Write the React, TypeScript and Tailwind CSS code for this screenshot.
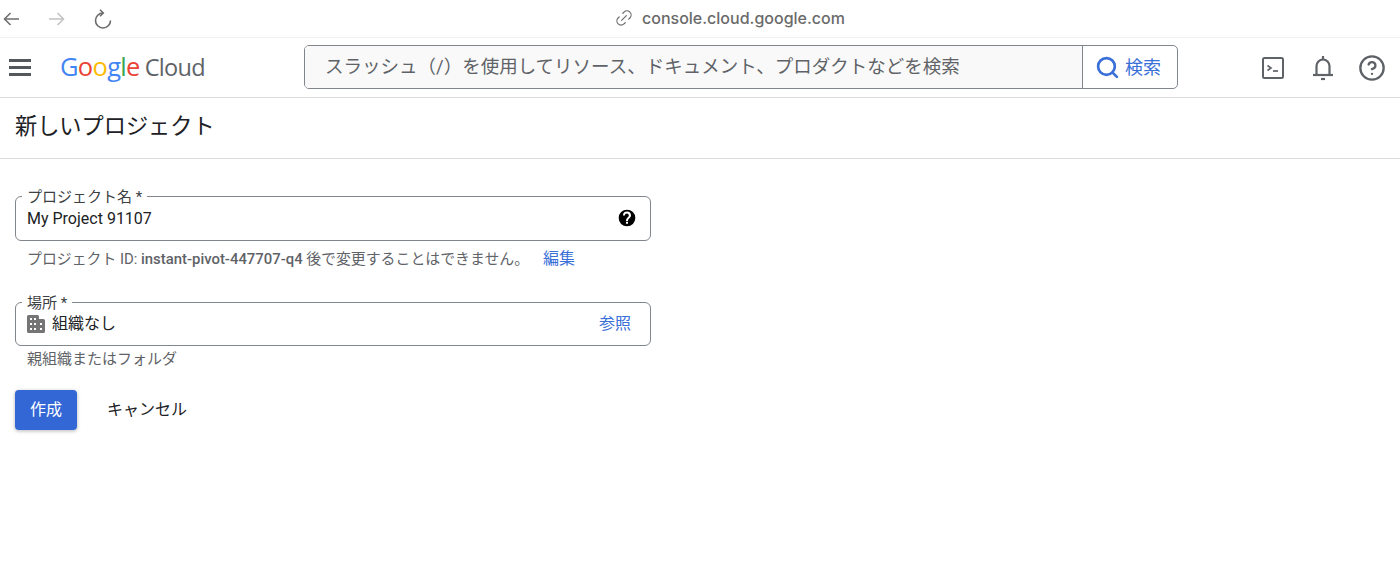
import { Link2, Search, CircleHelp } from 'lucide-react';

const font = "font-['Roboto','Noto_Sans_CJK_JP',sans-serif]";

function BackArrow({ className }: { className: string }) {
  return (
    <svg width="16" height="14" viewBox="0 0 16 14" fill="none" stroke="currentColor" strokeWidth="1.500" className={className}>
      <path d="M16 7H1.500" />
      <path d="M7.500 1 1.500 7l6 6" />
    </svg>
  );
}

function Reload() {
  return (
    <svg width="18" height="20" viewBox="0 0 18 20" fill="none" stroke="#6b6b6b" strokeWidth="1.600">
      <path d="M9 4a7.500 7.500 0 1 0 7.500 7.500" />
      <path d="M6 .7 9.300 4 6 7.300" />
    </svg>
  );
}

function CloudShell() {
  return (
    <svg width="24" height="24" viewBox="0 0 24 24" fill="none" stroke="#5f6368" strokeWidth="2">
      <rect x="2" y="2" width="20" height="20" rx="1.500" />
      <path d="M6.500 9.500 10 12l-3.500 2.500" strokeWidth="1.700" />
      <path d="M12 15h5" strokeWidth="1.700" />
    </svg>
  );
}

function BellIcon() {
  return (
    <svg width="22" height="26" viewBox="0 0 22 26" fill="none" stroke="#5f6368" strokeWidth="2.200">
      <path d="M4.500 20v-9a6.500 6.500 0 0 1 13 0v9" />
      <path d="M1 20h20" />
      <path d="M9 24h4" />
      <path d="M11 1v4" />
    </svg>
  );
}

function Building() {
  return (
    <svg width="18" height="18" viewBox="0 0 18 18" className="shrink-0">
      <path fill="#757575" d="M0 1.500A1.500 1.500 0 0 1 1.500 0h9A1.500 1.500 0 0 1 12 1.500V4h4.500A1.500 1.500 0 0 1 18 5.500v11a1.500 1.500 0 0 1-1.500 1.500h-15A1.500 1.500 0 0 1 0 16.500z" />
      <g fill="#fff">
        <rect x="3" y="3" width="2" height="2" />
        <rect x="7" y="3" width="2" height="2" />
        <rect x="3" y="8" width="2" height="2" />
        <rect x="7" y="8" width="2" height="2" />
        <rect x="3" y="13" width="2" height="2" />
        <rect x="7" y="13" width="2" height="2" />
        <rect x="13" y="8" width="2" height="2" />
        <rect x="13" y="13" width="2" height="2" />
      </g>
    </svg>
  );
}

function Field({ label, height, children }: { label: string; height: string; children: React.ReactNode }) {
  return (
    <div className={`${height} relative flex w-[636px] items-center rounded-[6px] border border-[#80868b] pl-[11px] pr-[15px]`}>
      <span className="absolute -top-[10px] left-[6px] bg-white px-[5px] text-[15px] leading-[20px] text-[#3c4043]">{label}</span>
      {children}
    </div>
  );
}

export default function App() {
  return (
    <div className={`${font} h-[587px] w-[1400px] overflow-hidden bg-white`}>
      <div className="relative flex h-[38px] items-center border-b border-[#f1f1f1] pl-[3px]">
        <BackArrow className="text-[#6b6b6b]" />
        <BackArrow className="ml-[30px] rotate-180 text-[#c2c2c2]" />
        <div className="ml-[29px]">
          <Reload />
        </div>
        <div className="absolute left-[614px] top-[8px] flex items-center gap-[8px]">
          <Link2 size={20} strokeWidth={1.4} className="-rotate-45 text-[#6b6b6b]" />
          <span className="font-['Inter',sans-serif] text-[16px] font-medium leading-[20px] text-[#6a6a6a]">console.cloud.google.com</span>
        </div>
      </div>

      <header className="flex h-[60px] items-center border-b border-[#dadce0] pl-[9px]">
        <div className="flex w-[22px] flex-col gap-[4.500px]">
          <span className="h-[2.500px] bg-[#55585b]" />
          <span className="h-[2.500px] bg-[#55585b]" />
          <span className="h-[2.500px] bg-[#55585b]" />
        </div>
        <div className="-mt-[3px] ml-[29px] flex w-[244px] items-baseline font-['Open_Sans',sans-serif] text-[25.500px] leading-[30px] tracking-[-0.7px]">
          <span className="text-[#4285f4]">G</span>
          <span className="text-[#ea4335]">o</span>
          <span className="text-[#fbbc05]">o</span>
          <span className="text-[#4285f4]">g</span>
          <span className="text-[#34a853]">l</span>
          <span className="text-[#ea4335]">e</span>
          <span className="ml-[5px] text-[23.500px] text-[#5f6368]">Cloud</span>
        </div>
        <div className="-mt-[1px] flex h-[44px] w-[874px] overflow-hidden rounded-[5px] border border-[#80868b]">
          <div className="flex flex-1 items-center bg-[#f9f9f9] pl-[20px] pt-[2px] text-[18.500px] text-[#5f6368]">
            スラッシュ（/）を使用してリソース、ドキュメント、プロダクトなどを検索
          </div>
          <div className="flex w-[95px] items-center gap-[5px] border-l border-[#80868b] pl-[12px] text-[18px] text-[#3a6fd8]">
            <Search size={25} strokeWidth={2.600} />
            検索
          </div>
        </div>
        <div className="ml-[83px] flex items-center text-[#5f6368]">
          <CloudShell />
          <div className="ml-[27px]">
            <BellIcon />
          </div>
          <CircleHelp size={28} strokeWidth={2} className="ml-[24px]" />
        </div>
      </header>

      <div className="flex h-[61px] items-center border-b border-[#dadce0] pb-[3px] pl-[15px] text-[22.200px] text-[#202124]">
        新しいプロジェクト
      </div>

      <main className="pl-[15px] pt-[37px]">
        <Field label="プロジェクト名 *" height="h-[45px]">
          <span className="flex-1 text-[16px] text-[#202124]">My Project 91107</span>
          <svg width="20" height="20" viewBox="0 0 24 24" className="-mr-[2px] -mt-[2px]">
            <path fill="#000" d="M12 2a10 10 0 1 0 0 20 10 10 0 0 0 0-20zm1.200 17h-2.400v-2.400h2.400zm2.300-7.400-1 1c-.8.800-1.300 1.500-1.300 3h-2.400v-.6c0-1.200.5-2.300 1.300-3.100l1.400-1.400c.4-.4.700-1 .7-1.600a2.400 2.400 0 0 0-4.800 0H7.200a4.800 4.800 0 0 1 9.600 0c0 1.100-.5 2-1.300 2.700z" />
          </svg>
        </Field>
        <div className="flex h-[36px] items-center pl-[12px] text-[14.900px] text-[#5f6368]">
          <span>プロジェクト ID: </span>
          <span className="ml-[3.500px] font-medium">instant-pivot-447707-q4</span>
          <span className="ml-[3.500px]">後で変更することはできません。</span>
          <span className="ml-[14px] text-[16px] text-[#3a6fd8]">編集</span>
        </div>
        <div className="mt-[25px]">
          <Field label="場所 *" height="h-[44px]">
            <Building />
            <span className="ml-[7px] flex-1 text-[16px] text-[#202124]">組織なし</span>
            <span className="mr-[4px] text-[16px] text-[#3a6fd8]">参照</span>
          </Field>
        </div>
        <div className="flex h-[26px] items-center pl-[12px] text-[15px] text-[#5f6368]">親組織またはフォルダ</div>
        <div className="mt-[18px] flex items-center">
          <button className="h-[40px] w-[62px] rounded-[4px] bg-[#3367d6] text-[16px] text-white shadow-[0_1px_3px_1px_rgba(60,64,67,0.25)]">作成</button>
          <button className="ml-[30px] text-[16px] text-[#202124]">キャンセル</button>
        </div>
      </main>
    </div>
  );
}
